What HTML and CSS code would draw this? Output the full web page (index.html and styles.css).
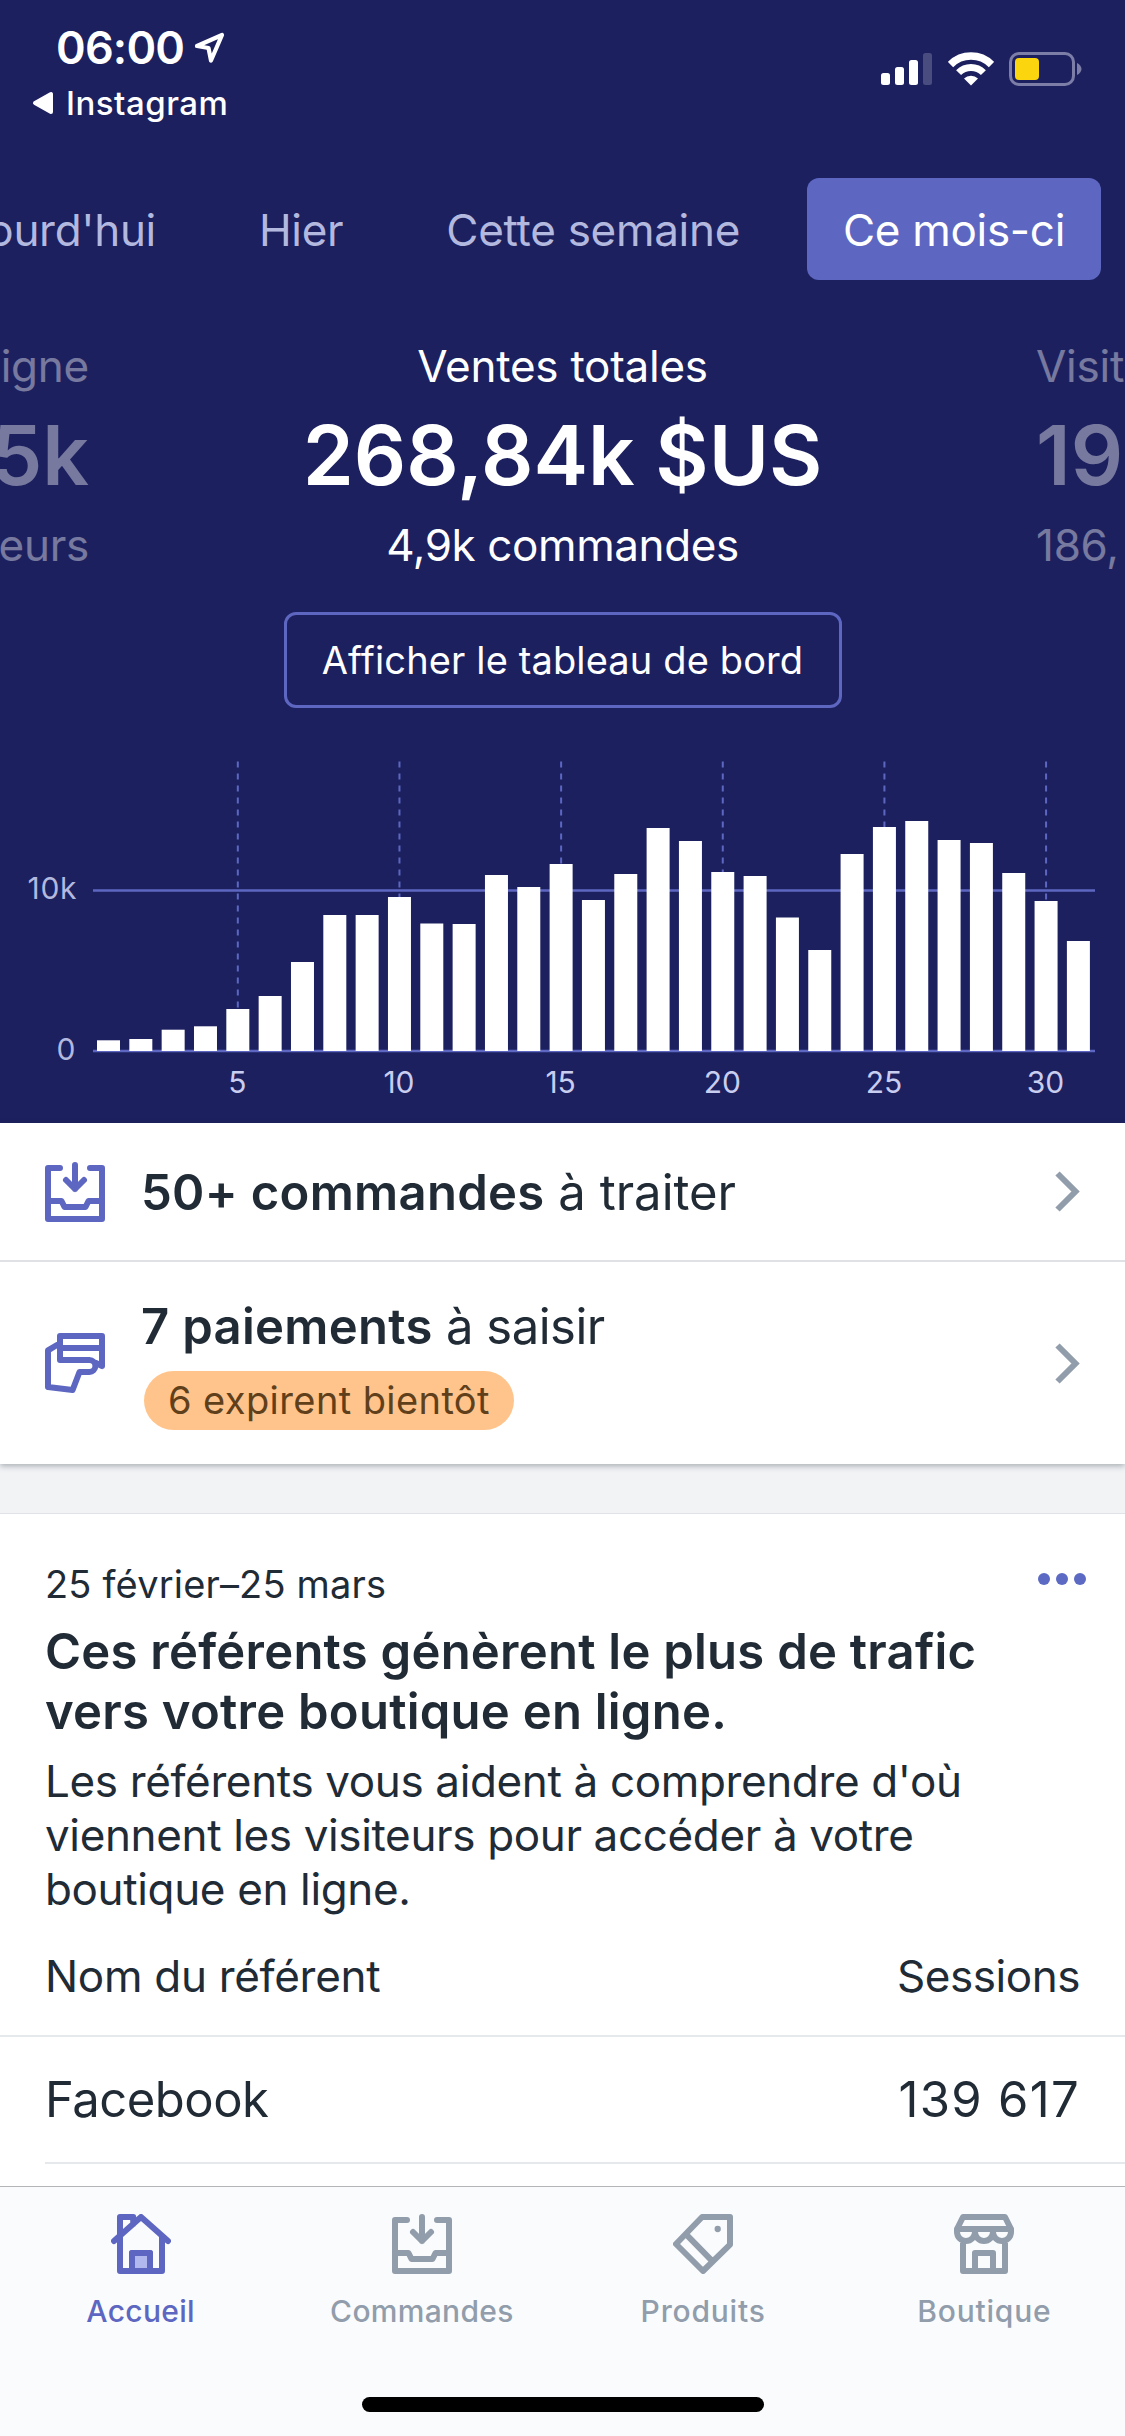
FILE: index.html
```html
<!DOCTYPE html>
<html lang="fr">
<head>
    <meta charset="UTF-8">
    <meta name="viewport" content="width=device-width, initial-scale=1.0">
    <title>Accueil</title>
    <link rel="stylesheet" href="styles.css">
</head>
<body>
    <div class="app">
        <header class="hero">
            <div class="status-bar">
                <div class="status-left">
                    <div class="clock">
                        <span>06:00</span>
                        <svg class="location" viewBox="0 0 32 34" width="32" height="34"><path d="M4 15 29 4 18 29.500 15.500 17z"/></svg>
                    </div>
                    <div class="back-app">
                        <svg width="22" height="24" viewBox="0 0 22 24"><path d="M3 12 19 3v18z" fill="#fff" stroke="#fff" stroke-width="4" stroke-linejoin="round"/></svg>
                        <span>Instagram</span>
                    </div>
                </div>
                <div class="status-right">
                    <svg width="52" height="34" viewBox="0 0 52 34" fill="#fff">
                        <rect x="0" y="21" width="9" height="12" rx="2.500"/>
                        <rect x="14" y="15" width="9" height="18" rx="2.500"/>
                        <rect x="28" y="8" width="9" height="25" rx="2.500"/>
                        <rect x="42" y="1" width="9" height="32" rx="2.500" opacity=".2"/>
                    </svg>
                    <svg class="wifi" width="46" height="34" viewBox="0 0 46 34">
                        <path d="M2.500 12.500a29 29 0 0 1 41 0" stroke-width="7.500"/>
                        <path d="M10.600 20.600a17.500 17.500 0 0 1 24.800 0" stroke-width="7"/>
                        <path class="wifi-dot" d="M23 33.500 16 26.500a10 10 0 0 1 14 0z"/>
                    </svg>
                    <svg width="74" height="34" viewBox="0 0 74 34">
                        <rect x="1.500" y="1.500" width="63" height="31" rx="8.500" fill="none" stroke="#7c7ea8" stroke-width="3"/>
                        <rect x="6" y="6" width="24" height="22" rx="4" fill="#fbd50e"/>
                        <path d="M68 11c2.500 1 4.500 3.500 4.500 6s-2 5-4.500 6z" fill="#7c7ea8"/>
                    </svg>
                </div>
            </div>

            <nav class="periods">
                <span class="period">Aujourd'hui</span>
                <span class="period">Hier</span>
                <span class="period">Cette semaine</span>
                <span class="period active">Ce mois-ci</span>
            </nav>

            <div class="metrics">
                <div class="metric prev">
                    <div class="metric-label">en ligne</div>
                    <div class="metric-value">5k</div>
                    <div class="metric-label">visiteurs</div>
                </div>
                <div class="metric">
                    <div class="metric-label">Ventes totales</div>
                    <div class="metric-value">268,84k $US</div>
                    <div class="metric-label orders">4,9k commandes</div>
                </div>
                <div class="metric next">
                    <div class="metric-label">Visiteurs</div>
                    <div class="metric-value">19</div>
                    <div class="metric-label">186,</div>
                </div>
            </div>

            <div class="dashboard-btn">Afficher le tableau de bord</div>

            <svg class="chart" id="chart" width="1125" height="362" viewBox="0 0 1125 362"></svg>
        </header>

        <section class="tasks">
            <div class="task">
                <svg class="icon" viewBox="0 0 20 20"><path d="M5 2H1v17h18V2h-4M10 1v8M7 6l3 3 3-3M1 13h4.500l1 2h7l1-2H19"/></svg>
                <div class="task-text"><b>50+ commandes</b> à traiter</div>
                <svg class="chevron" viewBox="0 0 26 41"><path d="M2.500 2.500l18 18-18 18"/></svg>
            </div>
            <div class="task tall">
                <svg class="icon" viewBox="0 0 20 20"><path d="M19 11V1H5v8h9.800a2 2 0 0 1 0 4h-3.300L9.200 19 1 18V5.800L4 4M5 5h14M19 11l-2-1"/></svg>
                <div class="task-text">
                    <div class="payments"><b>7 paiements</b> à saisir</div>
                    <span class="badge">6 expirent bientôt</span>
                </div>
                <svg class="chevron" viewBox="0 0 26 41"><path d="M2.500 2.500l18 18-18 18"/></svg>
            </div>
        </section>

        <section class="card">
            <div class="card-top">
                <span class="date">25 février–25 mars</span>
                <svg width="50" height="12" viewBox="0 0 50 12" fill="#5c6ac4"><circle cx="7" cy="6" r="6"/><circle cx="25" cy="6" r="6"/><circle cx="43" cy="6" r="6"/></svg>
            </div>
            <h2>Ces référents génèrent le plus de trafic<br>vers votre boutique en ligne.</h2>
            <p>Les référents vous aident à comprendre d'où<br>viennent les visiteurs pour accéder à votre<br>boutique en ligne.</p>
            <div class="row head">
                <span>Nom du référent</span>
                <span class="sessions">Sessions</span>
            </div>
            <div class="row">
                <span>Facebook</span>
                <span class="count">139 617</span>
            </div>
        </section>

        <footer class="tab-bar">
            <div class="tabs">
                <div class="tab active">
                    <svg class="icon" viewBox="0 0 20 20"><path class="door" d="M7 13h6v6H7z"/><path d="M1 9l9-8 9 8M3 7.200V1h4.400v2.300M3 7.500V19h14V7.500M7 19v-6h6v6"/></svg>
                    <span class="t-home">Accueil</span>
                </div>
                <div class="tab">
                    <svg class="icon" viewBox="0 0 20 20"><path d="M5 2H1v17h18V2h-4M10 1v8M7 6l3 3 3-3M1 13h4.500l1 2h7l1-2H19"/></svg>
                    <span class="t-orders">Commandes</span>
                </div>
                <div class="tab">
                    <svg class="icon" viewBox="0 0 20 20"><path d="M9.700 1H19v9.200L10 19 1 10zM4.300 6.700l8.800 9"/><circle class="dot" cx="14.900" cy="5" r="1.050"/></svg>
                    <span class="t-products">Produits</span>
                </div>
                <div class="tab">
                    <svg class="icon" viewBox="0 0 20 20"><path d="M1 5l2-4h14l2 4zM1 5v1a3 3 0 0 0 6 0 3 3 0 0 0 6 0 3 3 0 0 0 6 0V5M7 5v1M13 5v1M3 9v10h14V9M7 19v-6h6v6"/></svg>
                    <span class="t-store">Boutique</span>
                </div>
            </div>
            <div class="home-indicator"></div>
        </footer>
    </div>

    <script>
        // Daily sales, in pixels above the zero line
        const days = [10.7, 12, 21.3, 24.7, 42, 55, 89, 136, 136, 154, 127.5, 127, 176, 164, 187, 151,
            177, 223, 210, 179, 175, 133.5, 101, 197, 224, 230, 211, 208, 178, 150, 110];
        const zero = 290;
        const step = 32.33;
        let grid = '';
        let bars = '';

        days.forEach((h, i) => {
            const x = 97 + i * step;
            const day = i + 1;
            if (day % 5 === 0) {
                const cx = x + 11.5;
                grid += `<line class="dash" x1="${cx}" y1="0.500" x2="${cx}" y2="${zero}"/>`;
                grid += `<text class="day" x="${cx - 0.5}" y="331.500">${day}</text>`;
            }
            bars += `<rect class="bar" x="${x}" y="${zero - h}" width="23" height="${h}"/>`;
        });

        grid += `<line class="level" x1="93" y1="129.500" x2="1095" y2="129.500"/>`;
        grid += `<line class="level" x1="93" y1="${zero}" x2="1095" y2="${zero}"/>`;
        grid += `<text class="axis" x="77" y="137.500">10k</text><text class="axis" x="76" y="298.500">0</text>`;
        document.getElementById('chart').innerHTML = grid + bars;
    </script>
</body>
</html>
```
FILE: styles.css
```css
* {
    box-sizing: border-box;
}
body {
    margin: 0;
    font-family: 'Inter', sans-serif;
    color: #212b36;
    background-color: #f1f3f5;
}
.app {
    width: 1125px;
    height: 2436px;
    display: flex;
    flex-direction: column;
    overflow: hidden;
    white-space: nowrap;
}
svg {
    display: block;
    flex: none;
}

/* Hero */
.hero {
    height: 1123px;
    flex: none;
    display: flex;
    flex-direction: column;
    align-items: center;
    background-color: #1c205f;
    color: #fff;
    overflow: hidden;
}
.status-bar {
    width: 100%;
    height: 179px;
    display: flex;
    justify-content: space-between;
    padding: 20px 42px 0 32px;
}
.clock,
.back-app {
    height: 55px;
    display: flex;
    align-items: center;
}
.clock {
    padding-left: 24px;
    gap: 9px;
    font-size: 45px;
    font-weight: 600;
    letter-spacing: -0.8px;
}
.location {
    fill: none;
    stroke: #fff;
    stroke-width: 4.2;
    stroke-linejoin: round;
}
.back-app {
    gap: 12px;
    font-size: 33px;
    font-weight: 450;
    letter-spacing: 0.5px;
}
.status-right {
    display: flex;
    gap: 15px;
    padding-top: 32px;
}
.wifi {
    fill: none;
    stroke: #fff;
}
.wifi-dot {
    fill: #fff;
    stroke: none;
}
.periods {
    width: 100%;
    height: 102px;
    flex: none;
    display: flex;
    justify-content: flex-end;
    gap: 31px;
    padding-right: 24px;
}
.period {
    padding: 0 36px;
    font-size: 44px;
    line-height: 104px;
    letter-spacing: -0.3px;
    color: #b3b8df;
}
.period.active {
    border-radius: 12px;
    background-color: #5d67c1;
    color: #fff;
}
.metrics {
    width: 100%;
    display: grid;
    grid-template-columns: 91px 1fr 91px;
    padding-top: 61px;
}
.metric {
    display: flex;
    flex-direction: column;
    align-items: center;
    gap: 20px;
    overflow: hidden;
}
.metric.prev,
.metric.next {
    opacity: 0.4;
}
.metric.prev {
    align-items: flex-end;
    padding-right: 2px;
}
.metric.next {
    align-items: flex-start;
    padding-left: 2px;
}
.metric-label {
    font-size: 44px;
    line-height: 50px;
    letter-spacing: -0.25px;
}
.metric-label.orders {
    letter-spacing: -0.4px;
}
.metric-value {
    font-size: 82px;
    font-weight: 600;
    line-height: 89px;
}
.dashboard-btn {
    width: 558px;
    height: 96px;
    margin-top: 42px;
    border: 3px solid #5d67c1;
    border-radius: 12px;
    text-align: center;
    font-size: 38px;
    line-height: 90px;
    letter-spacing: 0.13px;
}
.chart {
    margin-top: 53px;
}
.dash {
    stroke: #5d67c1;
    stroke-width: 2;
    stroke-dasharray: 6 6;
}
.level {
    stroke: #5d67c1;
    stroke-width: 2.5;
}
.bar {
    fill: #fff;
}
.day,
.axis {
    font-size: 30px;
    fill: #c9cdf0;
}
.day {
    text-anchor: middle;
}
.axis {
    text-anchor: end;
    fill: #b3b8df;
    letter-spacing: 0.6px;
}

/* Tasks */
.tasks {
    position: relative;
    flex: none;
    background-color: #fff;
    box-shadow: 0 2px 6px rgba(33, 43, 54, 0.35);
}
.task {
    display: flex;
    align-items: center;
    height: 139px;
    padding: 0 44px 0 45px;
    border-bottom: 2px solid #dfe1e4;
}
.task.tall {
    height: 202px;
    border-bottom: 0;
}
.icon {
    width: 60px;
    height: 60px;
    fill: none;
    stroke: #5d67c1;
    stroke-width: 2;
    stroke-linecap: round;
    stroke-linejoin: round;
}
.task-text {
    flex: 1;
    margin-left: 36px;
    padding-top: 2px;
    font-size: 49px;
    line-height: 60px;
}
.task-text b {
    font-weight: 600;
    letter-spacing: 0.3px;
}
.payments {
    letter-spacing: -0.5px;
}
.badge {
    display: inline-block;
    height: 59px;
    margin: 14px 0 2px 3px;
    padding: 0 24px 0 24px;
    border-radius: 30px;
    vertical-align: top;
    font-size: 38px;
    line-height: 59px;
    letter-spacing: 0.41px;
    color: #5f401b;
    background-color: #ffc48b;
}
.chevron {
    width: 26px;
    height: 41px;
    fill: none;
    stroke: #919dab;
    stroke-width: 6;
}

/* Referrers card */
.card {
    flex: 1;
    min-height: 0;
    margin-top: 49px;
    padding-top: 45px;
    border-top: 1px solid #dfe3e8;
    background-color: #fff;
}
.card-top {
    display: flex;
    justify-content: space-between;
    height: 50px;
    padding: 0 38px 0 45px;
}
.card-top svg {
    margin-top: 14px;
}
.date {
    font-size: 38px;
    line-height: 50px;
    letter-spacing: 0.17px;
}
h2 {
    margin: 13px 45px 0;
    font-size: 49px;
    font-weight: 600;
    line-height: 60px;
    letter-spacing: 0.25px;
}
p {
    margin: 12px 45px 0;
    font-size: 44px;
    line-height: 54px;
    letter-spacing: -0.36px;
}
.row {
    display: flex;
    align-items: center;
    justify-content: space-between;
    height: 127px;
    margin-left: 45px;
    padding-right: 45px;
    border-bottom: 2px solid #e6e9ec;
    font-size: 49px;
    letter-spacing: -0.5px;
}
.row.head {
    height: 121px;
    margin-left: 0;
    padding-left: 45px;
    font-size: 44px;
    letter-spacing: -0.3px;
}
.sessions {
    letter-spacing: -0.45px;
}
.count {
    letter-spacing: 1.3px;
}

/* Tab bar */
.tab-bar {
    height: 250px;
    flex: none;
    display: flex;
    flex-direction: column;
    align-items: center;
    border-top: 1px solid #b3b5b8;
    background-color: #fafbfd;
}
.tabs {
    width: 100%;
    display: grid;
    grid-template-columns: repeat(4, 1fr);
    padding-top: 27px;
}
.tab {
    display: flex;
    flex-direction: column;
    align-items: center;
    gap: 17px;
    font-size: 30px;
    font-weight: 450;
    line-height: 40px;
    letter-spacing: 0.3px;
    color: #919dab;
}
.tab .icon {
    stroke: #919dab;
}
.tab.active {
    color: #5d67c1;
}
.tab.active .icon {
    stroke: #5d67c1;
}
.tab .door {
    fill: #b1b8ee;
}
.tab .dot {
    fill: #919dab;
    stroke: none;
}
.t-products,
.t-store {
    letter-spacing: 0.8px;
}
.home-indicator {
    width: 402px;
    height: 15px;
    margin-top: 66px;
    border-radius: 8px;
    background-color: #000;
}
```
